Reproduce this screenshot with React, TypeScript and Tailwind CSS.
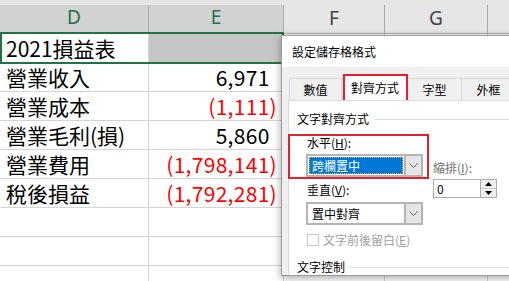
const cjk = "font-['Noto_Sans_CJK_TC','Noto_Sans',sans-serif]";

const rows = [
  { label: '2021損益表', value: '', neg: false },
  { label: '營業收入', value: '6,971', neg: false },
  { label: '營業成本', value: '(1,111)', neg: true },
  { label: '營業毛利(損)', value: '5,860', neg: false },
  { label: '營業費用', value: '(1,798,141)', neg: true },
  { label: '稅後損益', value: '(1,792,281)', neg: true },
  { label: '', value: '', neg: false },
  { label: '', value: '', neg: false },
  { label: '', value: '', neg: false },
];

function Chevron() {
  return (
    <svg width="9" height="5" viewBox="0 0 9 5">
      <polyline points="0.5,0.5 4.5,4.5 8.5,0.5" fill="none" stroke="#606060" strokeWidth="1" />
    </svg>
  );
}

function Combo({ text, focused }: { text: string; focused?: boolean }) {
  return (
    <div className="flex h-[23px] w-[117px] border-2 border-[#b4b4b4] bg-white">
      <div className="flex flex-1 items-center p-px">
        {focused ? (
          <div className="flex h-full w-full items-center border border-dotted border-[#f0a030] bg-[#0078d7] pl-[2px] text-white">
            {text}
          </div>
        ) : (
          <div className="pl-[3px]">{text}</div>
        )}
      </div>
      <div className="flex w-[17px] items-center justify-center border-l-2 border-[#b4b4b4] bg-[#e5e5e5]">
        <Chevron />
      </div>
    </div>
  );
}

function Sheet() {
  return (
    <div className={`flex flex-col ${cjk}`}>
      {/* top strip */}
      <div className="h-[5px] bg-[#e6e6e6]" />

      {/* column headers */}
      <div className="flex h-[29px] font-['Noto_Sans',sans-serif] text-[19px]">
        <div className="flex w-[149px] items-center justify-center border-r border-b-2 border-r-[#ababab] border-b-[#217346] bg-[#d2d2d2] pb-[2px] text-[#217346]">D</div>
        <div className="flex w-[135px] items-center justify-center border-r border-b-2 border-r-[#ababab] border-b-[#217346] bg-[#d2d2d2] pb-[2px] text-[#217346]">E</div>
        <div className="flex w-[101px] items-center justify-center border-r border-b border-[#ababab] bg-[#e6e6e6] pb-[2px] text-[#444]">F</div>
        <div className="flex w-[103px] items-center justify-center border-r border-b border-[#ababab] bg-[#e6e6e6] pb-[2px] text-[#444]">G</div>
        <div className="flex-1 border-b border-[#ababab] bg-[#e6e6e6]" />
      </div>

      {/* rows */}
      {rows.map((r, i) => (
        <div key={i} className="flex h-[29px] text-[21px] leading-none text-black">
          <div className="flex w-[149px] items-center border-r border-b border-[#d4d4d4] pl-[6px]">{r.label}</div>
          <div
            className={`flex w-[135px] items-center justify-end border-r border-b border-[#d4d4d4] pr-[6px] tracking-[0.3px] ${i === 0 ? 'bg-[#c6c6c6]' : ''} ${r.neg ? 'text-[#ff0000]' : ''}`}
          >
            {r.value}
            {r.value && !r.neg && <span className="invisible">)</span>}
          </div>
          <div className="w-[101px] border-r border-b border-[#d4d4d4]" />
          <div className="w-[103px] border-r border-b border-[#d4d4d4]" />
          <div className="flex-1 border-b border-[#d4d4d4]" />
        </div>
      ))}
    </div>
  );
}

function Dialog() {
  return (
    <div className={`absolute top-[35px] left-[281px] flex h-[241px] w-[240px] flex-col border border-[#9a9a9a] bg-[#f0f0f0] text-[12px] leading-[16px] text-black shadow-[0_2px_8px_rgba(0,0,0,0.35)] ${cjk}`}>
      {/* title */}
      <div className="flex h-[31px] items-center bg-white pl-[10px]">設定儲存格格式</div>

      {/* tabs */}
      <div className="flex h-[33px] items-end pl-[7px]">
        <div className="flex h-[22px] w-[53px] items-center justify-center border border-b-0 border-[#d9d9d9]">數值</div>
        <div className="flex h-[25px] w-[66px] items-center justify-center border border-b-0 border-[#d9d9d9] bg-white">對齊方式</div>
        <div className="flex h-[22px] w-[54px] items-center justify-center border border-b-0 border-l-0 border-[#d9d9d9]">字型</div>
        <div className="flex h-[22px] w-[54px] items-center justify-center border border-b-0 border-l-0 border-[#d9d9d9]">外框</div>
      </div>
      {/* red mark on selected tab */}
      <div className="absolute top-[38px] left-[61px] h-[29px] w-[65px] border-2 border-[#e5202e]" />

      {/* panel */}
      <div className="relative ml-[6px] flex-1 border-t border-l border-[#d9d9d9] bg-white pt-[10px] pl-[8px]">
        <div className="flex h-[16px] items-center">
          <span>文字對齊方式</span>
          <div className="ml-[6px] flex-1 border-t border-[#dcdcdc]" />
        </div>

        <div className="mt-[8px] flex">
          <div className="ml-[9px] flex w-[117px] flex-col">
            <div className="pl-px">
              水平(<span className="underline">H</span>):
            </div>
            <div className="mt-[3px]">
              <Combo text="跨欄置中" focused />
            </div>
            <div className="mt-[5px] pl-px">
              垂直(<span className="underline">V</span>):
            </div>
            <div className="mt-[4px]">
              <Combo text="置中對齊" />
            </div>
          </div>

          <div className="ml-[10px] flex flex-col pt-[25px]">
            <div className="text-[#6d6d6d]">
              縮排(<span className="underline">I</span>):
            </div>
            <div className="mt-[3px] flex h-[19px] w-[64px] border border-[#adadad] bg-white">
              <div className="flex flex-1 items-center pl-[3px]">0</div>
              <div className="flex w-[16px] flex-col border-l border-[#adadad] bg-[#f0f0f0]">
                <div className="flex flex-1 items-center justify-center border-b border-[#cfcfcf]">
                  <svg width="7" height="4" viewBox="0 0 7 4"><polygon points="0,4 3.5,0 7,4" fill="#000" /></svg>
                </div>
                <div className="flex flex-1 items-center justify-center">
                  <svg width="7" height="4" viewBox="0 0 7 4"><polygon points="0,0 3.5,4 7,0" fill="#000" /></svg>
                </div>
              </div>
            </div>
          </div>
        </div>

        <div className="mt-[7px] ml-[10px] flex h-[16px] items-center">
          <div className="h-[12px] w-[12px] border border-[#cccccc] bg-white" />
          <span className="ml-[4px] text-[#a0a0a0]">
            文字前後留白(<span className="underline">E</span>)
          </span>
        </div>

        <div className="mt-[11px] flex h-[16px] items-center">
          <span>文字控制</span>
          <div className="ml-[5px] flex-1 border-t border-[#dcdcdc]" />
        </div>

        {/* red mark round the horizontal group */}
        <div className="absolute top-[33px] left-[-1px] h-[45px] w-[141px] border-2 border-[#e5202e]" />
      </div>
    </div>
  );
}

export default function App() {
  return (
    <div className="relative h-[281px] w-[509px] overflow-hidden bg-white">
      <Sheet />
      {/* selection outline D1:E1 */}
      <div className="absolute top-[32px] left-0 h-[32px] w-[284px] border-2 border-[#217346]" />
      <Dialog />
    </div>
  );
}
